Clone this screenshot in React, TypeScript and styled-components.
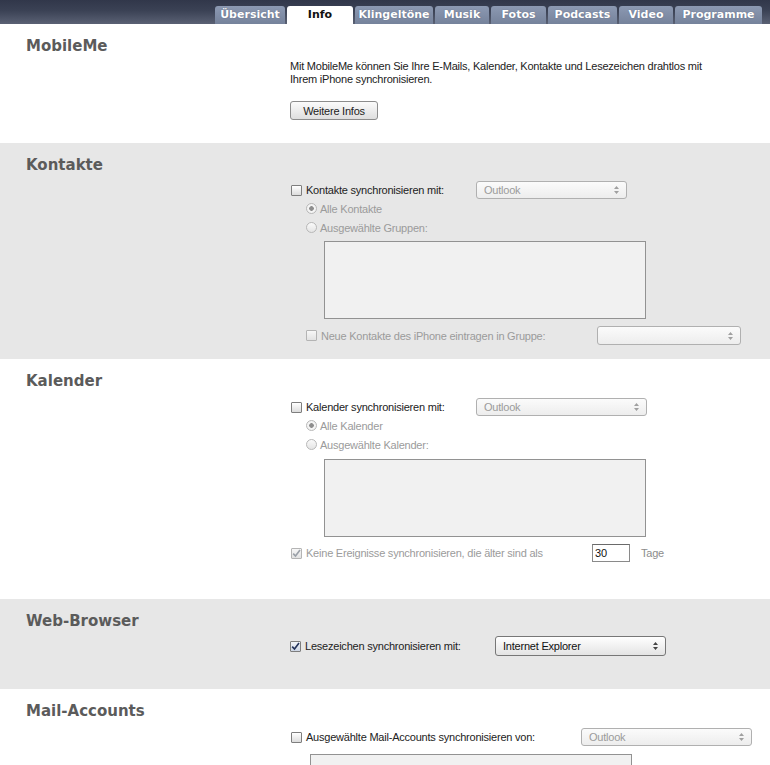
import React from "react";
import styled, { createGlobalStyle } from "styled-components";

const Global = createGlobalStyle`
  html, body { margin: 0; padding: 0; background: #ffffff; }
  body { font-family: "Liberation Sans", Arial, sans-serif; font-size: 11px; letter-spacing: -0.22px; color: #222; }
`;

const Page = styled.div`
  width: 770px;
  height: 765px;
  overflow: hidden;
`;

const TabBar = styled.nav`
  height: 24px;
  display: flex;
  align-items: flex-end;
  gap: 2px;
  padding-left: 215px;
  box-sizing: border-box;
  background: linear-gradient(#31374a 0%, #3b4255 45%, #5a6174 100%);
`;

const Tab = styled.div<{ $w: number; $active?: boolean }>`
  width: ${(p) => p.$w}px;
  height: 18px;
  border-radius: 3px 3px 0 0;
  text-align: center;
  letter-spacing: 0;
  font: bold 11px/18px "DejaVu Sans", Verdana, sans-serif;
  color: ${(p) => (p.$active ? "#111" : "#ffffff")};
  background: ${(p) =>
    p.$active ? "#ffffff" : "linear-gradient(#8c99b2, #75829b)"};
  text-shadow: ${(p) => (p.$active ? "none" : "0 0 1px rgba(40,50,70,0.5)")};
`;

const Section = styled.section<{ $shade?: boolean; $pb: number }>`
  background: ${(p) => (p.$shade ? "#e7e7e7" : "#ffffff")};
  padding: 12px 0 ${(p) => p.$pb}px 26px;
`;

const Heading = styled.h2`
  margin: 0;
  letter-spacing: 0;
  font: bold 15px/20px "DejaVu Sans", Verdana, sans-serif;
  color: #5b5b5b;
`;

const Body = styled.div<{ $mt: number }>`
  margin: ${(p) => p.$mt}px 0 0 264px;
  display: flex;
  flex-direction: column;
`;

const Description = styled.p`
  margin: 0;
  line-height: 13px;
  color: #222;
`;

const Button = styled.div`
  margin-top: 15px;
  width: 88px;
  height: 19px;
  box-sizing: border-box;
  border: 1px solid #8c8c8c;
  border-radius: 3px;
  background: linear-gradient(#fbfbfb, #dedede);
  display: flex;
  align-items: center;
  justify-content: center;
  color: #222;
`;

const Row = styled.div<{ $h: number; $indent?: number; $mt?: number }>`
  display: flex;
  align-items: center;
  height: ${(p) => p.$h}px;
  margin-left: ${(p) => p.$indent ?? 0}px;
  margin-top: ${(p) => p.$mt ?? 0}px;
`;

const LabelCell = styled.div<{ $w: number; $disabled?: boolean }>`
  width: ${(p) => p.$w}px;
  display: flex;
  align-items: center;
  gap: 4px;
  color: ${(p) => (p.$disabled ? "#9b9b9b" : "#222")};
  white-space: nowrap;
`;

const Box = styled.span<{ $disabled?: boolean; $checked?: boolean }>`
  width: 11px;
  height: 11px;
  box-sizing: border-box;
  flex: none;
  border: 1px solid ${(p) => (p.$disabled ? "#b4b4b4" : "#7e7e7e")};
  border-radius: 1px;
  background: ${(p) =>
    p.$checked && !p.$disabled
      ? "linear-gradient(#f2f5fa, #cdd6e4)"
      : p.$disabled
      ? "linear-gradient(#f7f7f7, #e2e2e2)"
      : "linear-gradient(#ffffff, #dcdcdc)"};
  display: flex;
  align-items: center;
  justify-content: center;
  svg { display: block; }
`;

const Radio = styled.span<{ $on?: boolean }>`
  width: 11px;
  height: 11px;
  box-sizing: border-box;
  flex: none;
  border: 1px solid #b8b8b8;
  border-radius: 50%;
  background: ${(p) =>
    p.$on
      ? "radial-gradient(circle, #8e8e8e 0 2px, #f4f4f4 2.6px)"
      : "linear-gradient(#fafafa, #e4e4e4)"};
`;

const RadioLabel = styled.div`
  display: flex;
  align-items: center;
  gap: 3px;
  color: #9b9b9b;
`;

const Select = styled.div<{ $w: number; $h: number; $disabled?: boolean }>`
  width: ${(p) => p.$w}px;
  height: ${(p) => p.$h}px;
  box-sizing: border-box;
  border: 1px solid ${(p) => (p.$disabled ? "#b0b0b0" : "#777")};
  border-radius: 3px;
  background: ${(p) =>
    p.$disabled ? "linear-gradient(#fbfbfb, #ededed)" : "linear-gradient(#ffffff, #e4e4e4)"};
  display: flex;
  align-items: center;
  justify-content: space-between;
  padding: 0 7px 0 7px;
  color: ${(p) => (p.$disabled ? "#9b9b9b" : "#111")};
`;

const ListBox = styled.div<{ $indent: number; $mt: number }>`
  margin: ${(p) => p.$mt}px 0 0 ${(p) => p.$indent}px;
  width: 322px;
  height: 78px;
  flex: none;
  box-sizing: border-box;
  border: 1px solid #929292;
  background: #f1f1f1;
`;

const DaysInput = styled.div`
  width: 38px;
  height: 18px;
  box-sizing: border-box;
  border: 1px solid #8a8a8a;
  border-top-color: #6a6a6a;
  background: #fff;
  padding-left: 2px;
  display: flex;
  align-items: center;
  color: #111;
`;

const Unit = styled.span`
  margin-left: 11px;
  color: #8c8c8c;
`;

const Arrows: React.FC<{ dim?: boolean }> = ({ dim }) => (
  <svg width="5" height="8" viewBox="0 0 5 8">
    <path d="M2.5 0 L5 3 L0 3 Z M2.5 8 L5 5 L0 5 Z" fill={dim ? "#a0a0a0" : "#444"} />
  </svg>
);

const Check: React.FC<{ dim?: boolean }> = ({ dim }) => (
  <svg width="9" height="9" viewBox="0 0 9 9">
    <path
      d="M1.2 4.6 L3.5 7 L8 1"
      fill="none"
      stroke={dim ? "#9aa0a8" : "#22325a"}
      strokeWidth="1.6"
    />
  </svg>
);

const tabs: [string, number][] = [
  ["Übersicht", 70],
  ["Info", 66],
  ["Klingeltöne", 78],
  ["Musik", 54],
  ["Fotos", 55],
  ["Podcasts", 69],
  ["Video", 54],
  ["Programme", 87],
];

export default function App() {
  return (
    <Page>
      <Global />
      <TabBar>
        {tabs.map(([t, w]) => (
          <Tab key={t} $w={w} $active={t === "Info"}>
            {t}
          </Tab>
        ))}
      </TabBar>

      <Section $pb={23}>
        <Heading>MobileMe</Heading>
        <Body $mt={4}>
          <Description>
            Mit MobileMe können Sie Ihre E-Mails, Kalender, Kontakte und Lesezeichen drahtlos mit
            <br />
            Ihrem iPhone synchronisieren.
          </Description>
          <Button>Weitere Infos</Button>
        </Body>
      </Section>

      <Section $shade $pb={14}>
        <Heading>Kontakte</Heading>
        <Body $mt={6}>
          <Row $h={18} $indent={1}>
            <LabelCell $w={185}>
              <Box />
              Kontakte synchronisieren mit:
            </LabelCell>
            <Select $w={151} $h={18} $disabled>
              Outlook
              <Arrows dim />
            </Select>
          </Row>
          <Row $h={19} $indent={16}>
            <RadioLabel>
              <Radio $on />
              Alle Kontakte
            </RadioLabel>
          </Row>
          <Row $h={19} $indent={16}>
            <RadioLabel>
              <Radio />
              Ausgewählte Gruppen:
            </RadioLabel>
          </Row>
          <ListBox $indent={34} $mt={4} />
          <Row $h={19} $indent={16} $mt={7}>
            <LabelCell $w={291} $disabled>
              <Box $disabled />
              Neue Kontakte des iPhone eintragen in Gruppe:
            </LabelCell>
            <Select $w={144} $h={19} $disabled>
              <span />
              <Arrows dim />
            </Select>
          </Row>
        </Body>
      </Section>

      <Section $pb={37}>
        <Heading>Kalender</Heading>
        <Body $mt={7}>
          <Row $h={18} $indent={1}>
            <LabelCell $w={185}>
              <Box />
              Kalender synchronisieren mit:
            </LabelCell>
            <Select $w={171} $h={18} $disabled>
              Outlook
              <Arrows dim />
            </Select>
          </Row>
          <Row $h={19} $indent={16}>
            <RadioLabel>
              <Radio $on />
              Alle Kalender
            </RadioLabel>
          </Row>
          <Row $h={19} $indent={16}>
            <RadioLabel>
              <Radio />
              Ausgewählte Kalender:
            </RadioLabel>
          </Row>
          <ListBox $indent={34} $mt={5} />
          <Row $h={18} $indent={1} $mt={7}>
            <LabelCell $w={301} $disabled>
              <Box $disabled $checked>
                <Check dim />
              </Box>
              Keine Ereignisse synchronisieren, die älter sind als
            </LabelCell>
            <DaysInput>30</DaysInput>
            <Unit>Tage</Unit>
          </Row>
        </Body>
      </Section>

      <Section $shade $pb={33}>
        <Heading>Web-Browser</Heading>
        <Body $mt={5}>
          <Row $h={20}>
            <LabelCell $w={205}>
              <Box $checked>
                <Check />
              </Box>
              Lesezeichen synchronisieren mit:
            </LabelCell>
            <Select $w={171} $h={20}>
              Internet Explorer
              <Arrows />
            </Select>
          </Row>
        </Body>
      </Section>

      <Section $pb={0}>
        <Heading>Mail-Accounts</Heading>
        <Body $mt={7}>
          <Row $h={18} $indent={1}>
            <LabelCell $w={290}>
              <Box />
              Ausgewählte Mail-Accounts synchronisieren von:
            </LabelCell>
            <Select $w={171} $h={18} $disabled>
              Outlook
              <Arrows dim />
            </Select>
          </Row>
          <ListBox $indent={20} $mt={8} />
        </Body>
      </Section>
    </Page>
  );
}
